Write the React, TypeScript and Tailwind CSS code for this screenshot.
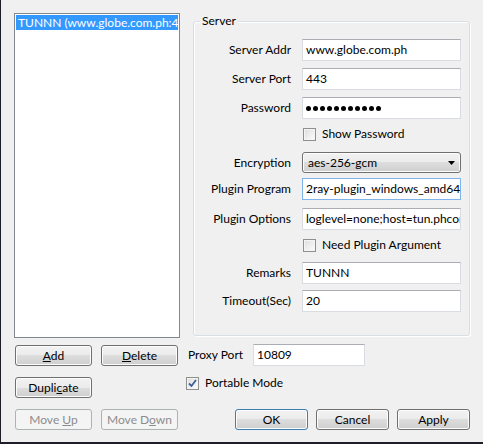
import type { ReactNode } from 'react'

// Win7-ish settings dialog: server list on the left, server properties on the right

const font = { fontFamily: 'Lato, "Noto Sans", Arial, sans-serif' }

const btnFace =
  'shadow-[inset_0_0_0_1px_#fcfcfc] bg-[linear-gradient(#f2f2f2_0%,#ebebeb_50%,#dddddd_50%,#cfcfcf_100%)]'

function Btn({ children, primary, disabled, wide }: { children: ReactNode; primary?: boolean; disabled?: boolean; wide?: boolean }) {
  if (disabled) {
    return (
      <div className="flex h-[21px] w-[77px] items-center justify-center rounded-[3px] border border-[#adb2b5] bg-[#f4f4f4] text-[12px] text-[#8c8c8c]">
        <span>{children}</span>
      </div>
    )
  }
  return (
    <div
      className={`flex h-[21px] items-center justify-center rounded-[3px] border text-[12px] text-black ${btnFace} ${
        wide ? 'w-[77px]' : 'w-[73px]'
      } ${primary ? 'border-[#3c7fb1]' : 'border-[#707070]'}`}
    >
      <span>{children}</span>
    </div>
  )
}

function CheckBox({ checked }: { checked?: boolean }) {
  return (
    <div className="flex h-[13px] w-[13px] shrink-0 items-center justify-center border border-[#8e8f8f] bg-[linear-gradient(135deg,#dcdcdc,#fefefe)] shadow-[inset_0_0_0_1px_#f4f4f4]">
      {checked && (
        <svg width="9" height="9" viewBox="0 0 9 9">
          <path d="M1 4.5 L3.5 7 L8 1" fill="none" stroke="#3a5f9a" strokeWidth="1.8" />
        </svg>
      )}
    </div>
  )
}

function Field({ label, children, focused, className = '' }: { label: string; children?: ReactNode; focused?: boolean; className?: string }) {
  return (
    <div className={`flex items-center ${className}`}>
      <div className="w-[98px] pr-[1px] text-right text-[12px] text-black">{label}</div>
      <div
        className={`ml-[10px] flex h-[22px] w-[159px] items-center overflow-hidden whitespace-nowrap border bg-white pl-[3px] text-[12px] text-black ${
          focused ? 'border-[#7eb4ea]' : 'border-[#d9dce0] border-t-[#abadb3]'
        }`}
      >
        {children}
      </div>
    </div>
  )
}

function CheckRow({ label, className = '' }: { label: string; className?: string }) {
  return (
    <div className={`flex h-[24px] items-center pl-[109px] ${className}`}>
      <CheckBox />
      <span className="ml-[6px] text-[12px] text-black">{label}</span>
    </div>
  )
}

export default function App() {
  return (
    <div style={font} className="h-[444px] w-[483px] overflow-hidden border-b-2 border-l border-[#1e1e28] bg-[#f0f0f0] pl-[13px] pt-[13px]">
      <div className="flex">
        {/* server list */}
        <div className="h-[325px] w-[166px] border border-[#828790] bg-white p-[1px]">
          <div className="h-[15px] overflow-hidden whitespace-nowrap bg-[#3399ff] pl-[2px] text-[12px] leading-[15px] text-white">
            TUNNN (www.globe.com.ph:443)
          </div>
        </div>

        {/* server group */}
        <div className="relative ml-[13px] mt-[8px] h-[315px] w-[277px] rounded-[3px] border border-[#d5dfe5] shadow-[inset_1px_1px_0_#fff,1px_1px_0_#fff]">
          <span className="absolute -top-[9px] left-[6px] bg-[#f0f0f0] px-[2px] text-[12px] leading-[16px] text-black">Server</span>
          <Field label="Server Addr" className="mt-[17px]">www.globe.com.ph</Field>
          <Field label="Server Port" className="mt-[7px]">443</Field>
          <Field label="Password" className="mt-[7px]">
            <div className="flex gap-[2px]">
              {Array.from({ length: 11 }).map((_, i) => (
                <div key={i} className="h-[5px] w-[5px] rounded-full bg-black" />
              ))}
            </div>
          </Field>
          <CheckRow label="Show Password" className="mt-[3px]" />
          <div className="mt-[6px] flex items-center">
            <div className="w-[98px] pr-[1px] text-right text-[12px] text-black">Encryption</div>
            <div className={`ml-[10px] flex h-[21px] w-[159px] items-center justify-between rounded-[3px] border border-[#707070] pl-[5px] pr-[5px] text-[12px] text-black ${btnFace}`}>
              <span>aes-256-gcm</span>
              <svg width="7" height="4" viewBox="0 0 7 4">
                <path d="M0 0 H7 L3.5 4 Z" fill="#000" />
              </svg>
            </div>
          </div>
          <Field label="Plugin Program" className="mt-[5px]" focused>2ray-plugin_windows_amd64</Field>
          <Field label="Plugin Options" className="mt-[8px]">loglevel=none;host=tun.phcorner.net</Field>
          <CheckRow label="Need Plugin Argument" className="mt-[3px]" />
          <Field label="Remarks" className="mt-[5px]">TUNNN</Field>
          <Field label="Timeout(Sec)" className="mt-[6px]">20</Field>
        </div>
      </div>

      <div className="mt-[6px] flex">
        {/* list actions */}
        <div className="flex flex-col gap-[11px] pl-[1px] pt-[1px]">
          <div className="flex gap-[9px]">
            <Btn wide>
              <span className="underline">A</span>dd
            </Btn>
            <Btn wide>
              <span className="underline">D</span>elete
            </Btn>
          </div>
          <Btn wide>
            Dupli<span className="underline">c</span>ate
          </Btn>
          <div className="flex gap-[9px]">
            <Btn disabled>
              Move <span className="underline">U</span>p
            </Btn>
            <Btn disabled>
              Move D<span className="underline">o</span>wn
            </Btn>
          </div>
        </div>

        {/* global options */}
        <div className="ml-[8px] flex flex-1 flex-col pr-[13px]">
          <div className="flex h-[22px] items-center">
            <span className="w-[67px] pl-[2px] text-[12px] text-black">Proxy Port</span>
            <div className="flex h-[22px] w-[112px] items-center border border-[#d9dce0] border-t-[#abadb3] bg-white pl-[3px] text-[12px] text-black">
              10809
            </div>
          </div>
          <div className="mt-[4px] flex h-[26px] items-center">
            <CheckBox checked />
            <span className="ml-[6px] text-[12px] text-black">Portable Mode</span>
          </div>
          <div className="mt-[13px] flex justify-end gap-[8px]">
            <Btn primary>OK</Btn>
            <Btn>Cancel</Btn>
            <Btn>Apply</Btn>
          </div>
        </div>
      </div>
    </div>
  )
}
